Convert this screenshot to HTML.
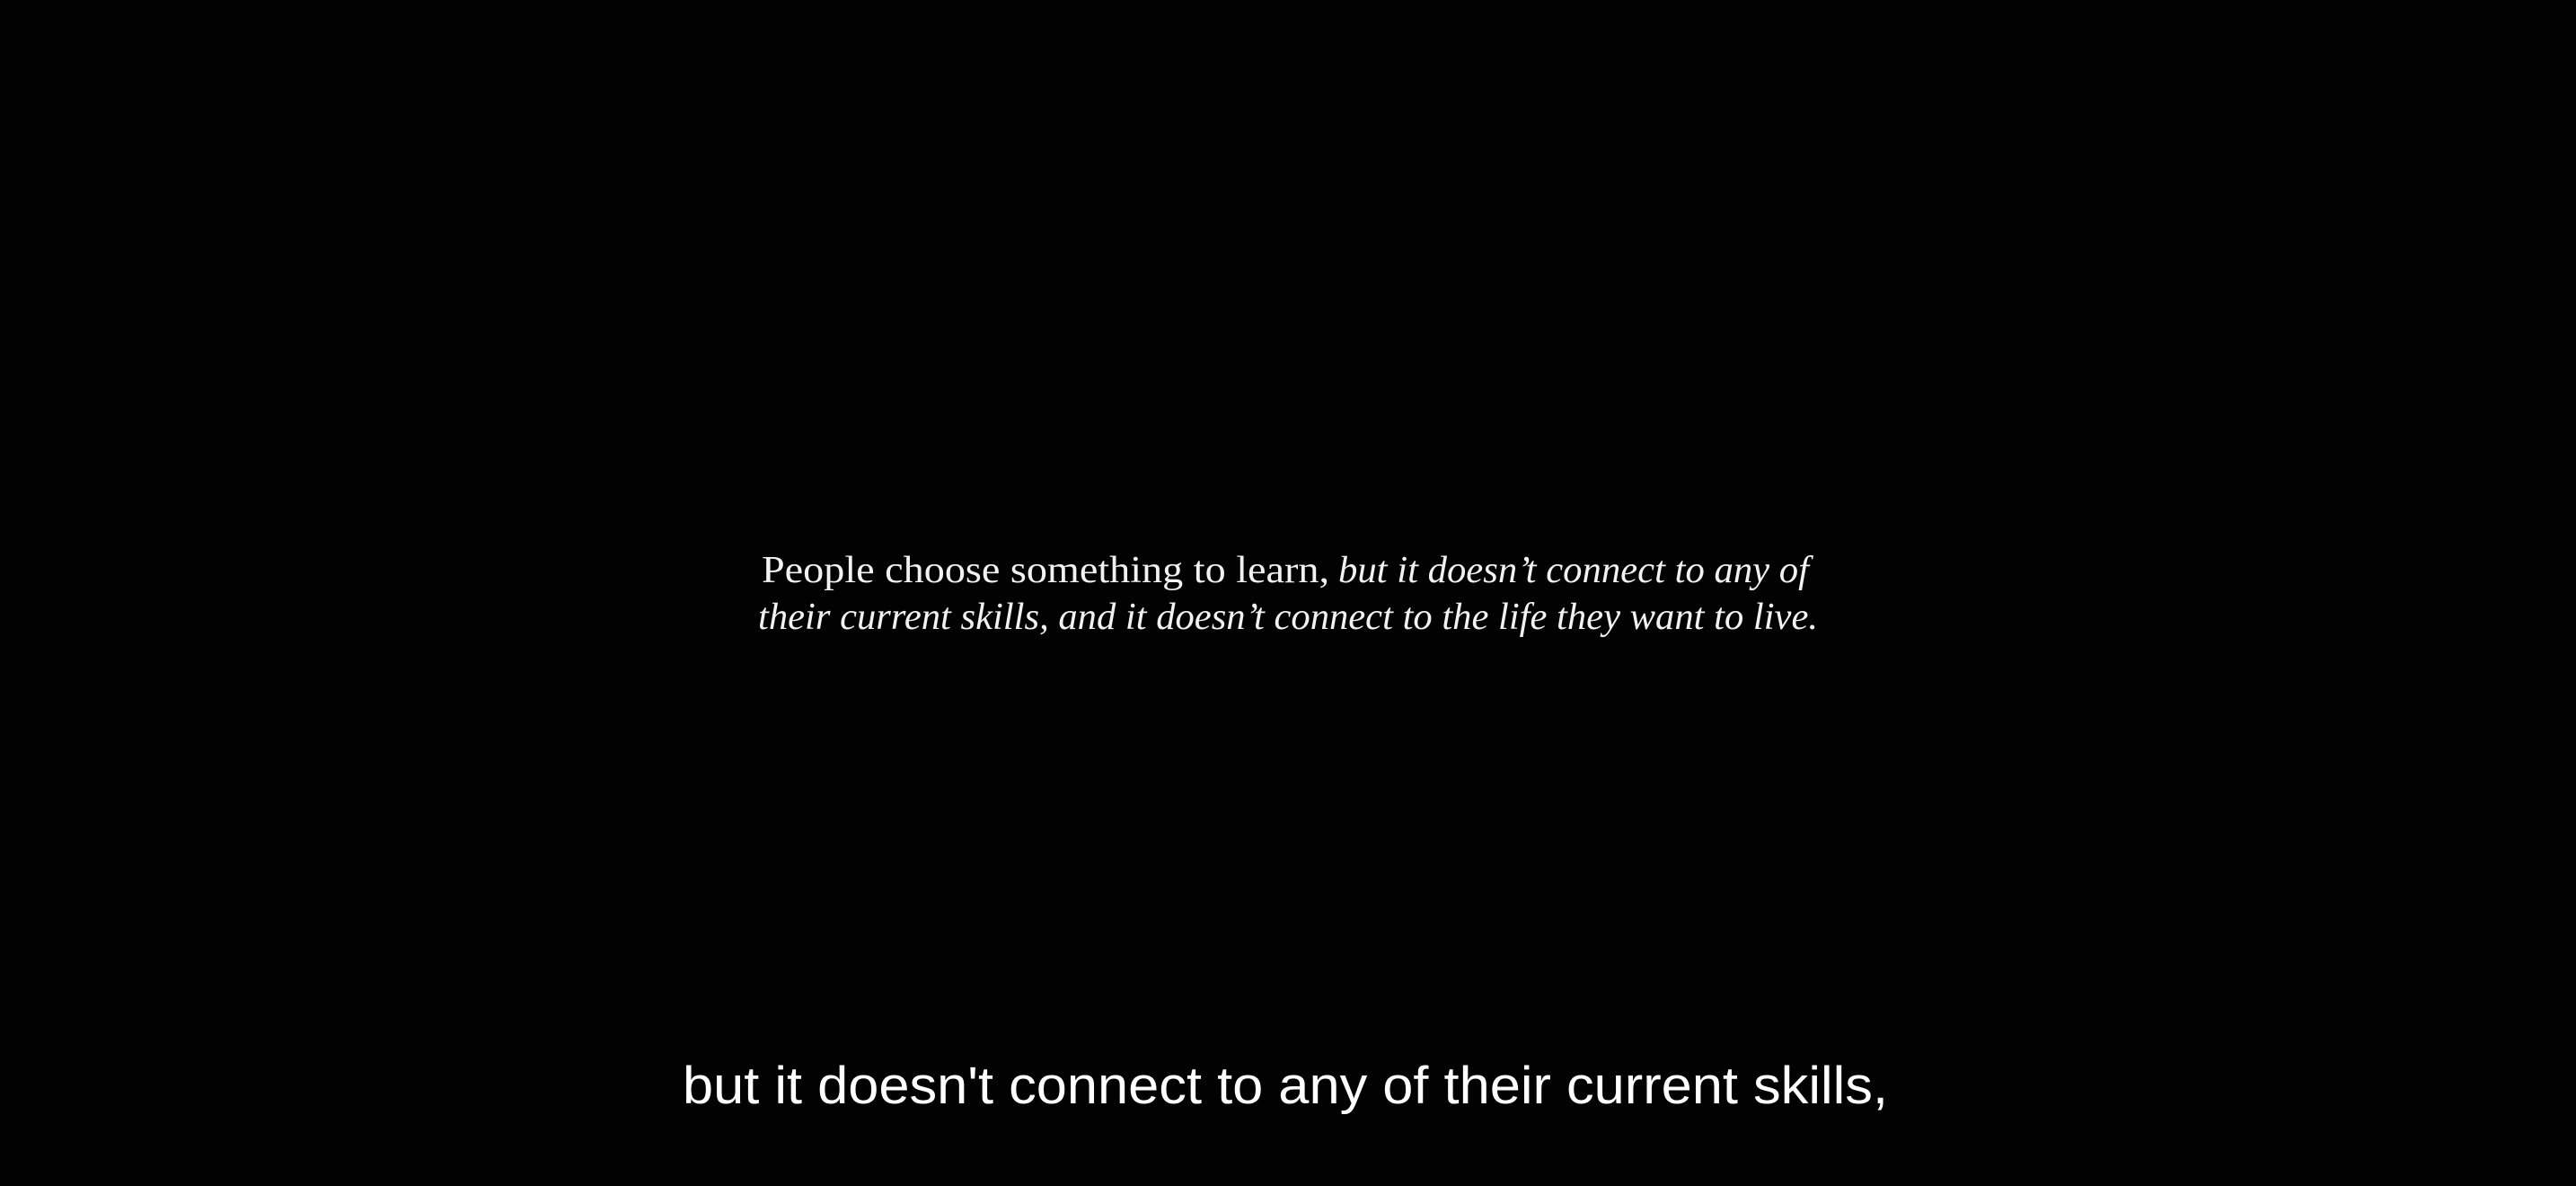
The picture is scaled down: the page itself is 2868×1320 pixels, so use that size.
<!DOCTYPE html>
<html><head><meta charset="utf-8"><style>
html,body{margin:0;padding:0;background:#020202;width:2868px;height:1320px;overflow:hidden}
svg{display:block}
</style></head><body>
<svg width="2868" height="1320" viewBox="0 0 2868 1320" xmlns="http://www.w3.org/2000/svg">
<rect width="2868" height="1320" fill="#020202"/>
<g fill="#f2f2f2" font-family="'Liberation Serif', serif" font-size="42">
<text x="848" y="648" textLength="632" lengthAdjust="spacingAndGlyphs">People choose something to learn,</text>
<text x="1490" y="648" font-style="italic" textLength="524" lengthAdjust="spacingAndGlyphs">but it doesn’t connect to any of</text>
<text x="844" y="700" font-style="italic" textLength="1180" lengthAdjust="spacingAndGlyphs">their current skills, and it doesn’t connect to the life they want to live.</text>
</g>
<text x="760" y="1228" fill="#ffffff" font-family="'Liberation Sans', sans-serif" font-size="58" textLength="1342" lengthAdjust="spacingAndGlyphs">but it doesn't connect to any of their current skills,</text>
</svg>
</body></html>
